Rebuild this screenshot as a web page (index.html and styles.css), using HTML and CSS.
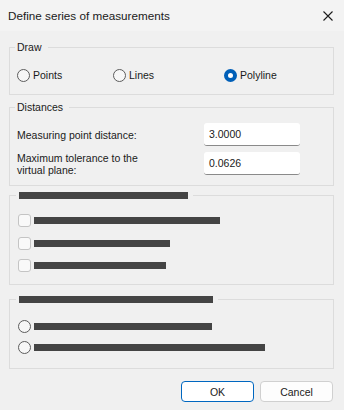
FILE: index.html
```html
<!DOCTYPE html>
<html lang="en">
<head>
    <meta charset="UTF-8">
    <meta name="viewport" content="width=device-width, initial-scale=1.0">
    <title>Define series of measurements</title>
    <link rel="stylesheet" href="styles.css">
</head>
<body>
    <div class="dialog">
        <div class="titlebar">
            <span class="title">Define series of measurements</span>
            <svg class="close" width="10" height="10" viewBox="0 0 10 10">
                <path d="M0.5 0.5 L9.5 9.5 M9.5 0.5 L0.5 9.5" stroke="#1b1b1b" stroke-width="1.1" fill="none"/>
            </svg>
        </div>

        <div class="content">
            <fieldset class="group group-draw">
                <legend>Draw</legend>
                <div class="draw-row">
                    <label class="option"><span class="radio"></span>Points</label>
                    <label class="option"><span class="radio"></span>Lines</label>
                    <label class="option"><span class="radio checked"></span>Polyline</label>
                </div>
            </fieldset>

            <fieldset class="group group-dist">
                <legend>Distances</legend>
                <div class="dist-grid">
                    <span class="dist-label">Measuring point distance:</span>
                    <div class="field">3.0000</div>
                    <span class="dist-label">Maximum tolerance to the<br>virtual plane:</span>
                    <div class="field">0.0626</div>
                </div>
            </fieldset>

            <fieldset class="group group-checks">
                <legend class="bar-legend"><span class="bar" style="width: 169px"></span></legend>
                <div class="list">
                    <div class="option"><span class="checkbox"></span><span class="bar" style="width: 186px"></span></div>
                    <div class="option"><span class="checkbox"></span><span class="bar" style="width: 136px"></span></div>
                    <div class="option"><span class="checkbox"></span><span class="bar" style="width: 132px"></span></div>
                </div>
            </fieldset>

            <fieldset class="group group-radios">
                <legend class="bar-legend"><span class="bar" style="width: 194px"></span></legend>
                <div class="list">
                    <div class="option"><span class="radio"></span><span class="bar" style="width: 178px"></span></div>
                    <div class="option"><span class="radio"></span><span class="bar" style="width: 231px"></span></div>
                </div>
            </fieldset>

            <div class="buttons">
                <button class="btn btn-default">OK</button>
                <button class="btn">Cancel</button>
            </div>
        </div>
    </div>
</body>
</html>
```

FILE: styles.css
```css
body {
    margin: 0;
    background-color: #f0f0f0;
    font-family: "Liberation Sans", Arial, sans-serif;
    font-size: 10.5px;
    color: #1a1a1a;
}
.dialog {
    width: 344px;
    height: 410px;
    overflow: hidden;
}
.titlebar {
    height: 31px;
    background-color: #f3f3f3;
    display: flex;
    align-items: center;
    justify-content: space-between;
    padding: 0 11px 0 8px;
}
.title {
    font-size: 11.7px;
}
.close {
    display: block;
}
.content {
    padding: 8px 10px 0 9px;
}
.group {
    margin: 0;
    border: 1px solid #dcdcdc;
    min-width: 0;
}
.group legend {
    margin-left: -2px;
    padding: 0 6px 0 2px;
    line-height: 16px;
}
.group-draw {
    padding: 12px 7px 11px 7px;
}
.draw-row {
    display: grid;
    grid-template-columns: 96px 111px auto;
    height: 16px;
    align-items: center;
}
.option {
    display: flex;
    align-items: center;
    line-height: 16px;
}
.radio {
    width: 11px;
    height: 11px;
    border: 1px solid #5c5c5c;
    border-radius: 50%;
    background-color: #f7f7f7;
    margin-right: 3px;
    flex-shrink: 0;
}
.radio.checked {
    width: 5px;
    height: 5px;
    border: 4px solid #005fb8;
    background-color: #ffffff;
}
.group-dist {
    margin-top: 4px;
    padding: 8px 7px 10px 7px;
}
.dist-grid {
    display: grid;
    grid-template-columns: 187px 96px;
    grid-auto-rows: 23px;
    row-gap: 6px;
    align-items: center;
}
.dist-label {
    line-height: 12px;
}
.field {
    height: 22px;
    line-height: 22px;
    padding-left: 5px;
    background-color: #ffffff;
    border-bottom: 1px solid #8a8a8a;
    border-radius: 3px;
}
.group .bar-legend {
    height: 7px;
    padding: 0 5px 0 3px;
    line-height: 7px;
}
.bar {
    display: block;
    height: 7px;
    background-color: #444444;
}
.group-checks {
    margin-top: 6px;
    padding: 15px 8px 12px 8px;
}
.group-radios {
    margin-top: 11px;
    padding: 17px 8px 14px 8px;
}
.list {
    display: flex;
    flex-direction: column;
}
.group-checks .list {
    gap: 9.5px;
}
.group-radios .list {
    gap: 8px;
}
.list .option {
    height: 13px;
    line-height: 13px;
}
.checkbox {
    width: 11px;
    height: 11px;
    border: 1px solid #c4c4c4;
    border-radius: 3px;
    background-color: #f9f9f9;
    margin-right: 3px;
    flex-shrink: 0;
}
.buttons {
    display: flex;
    justify-content: flex-end;
    gap: 6px;
    margin-top: 12px;
    padding-right: 1px;
}
.btn {
    width: 73px;
    height: 21px;
    padding: 0;
    font-family: inherit;
    font-size: 10.5px;
    color: #1a1a1a;
    background-color: #fdfdfd;
    border: 1px solid #d0d0d0;
    border-radius: 4px;
}
.btn-default {
    border-color: #0067c0;
    background-color: #ffffff;
}
```
